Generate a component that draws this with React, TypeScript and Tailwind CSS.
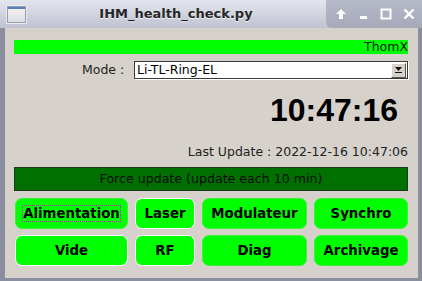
const dejavu = { fontFamily: '"DejaVu Sans", "Liberation Sans", sans-serif' };

function TitleBar() {
  return (
    <div className="relative flex h-[28px] items-center bg-gradient-to-b from-[#e4e6ee] to-[#bfc2d0]">
      <div className="ml-[7px] flex h-[17px] w-[19px] flex-col border border-[#9a9cae] bg-gradient-to-b from-[#f4f4f6] to-[#dcdde3] shadow-[0_0_0_1px_#e9eaf0]">
        <div className="h-[2px] bg-[#5b7fc4]" />
      </div>
      <div className="flex-1 text-center text-[13px] font-bold text-[#262626] [text-shadow:0_1px_0_#f4f4f8]" style={dejavu}>
        IHM_health_check.py
      </div>
      <div className="flex h-full w-[96px] items-center justify-around rounded-bl-[6px] bg-gradient-to-b from-[#b6b9c8] to-[#a6a9ba] pl-[4px] pr-[2px] text-white">
        <svg width="12" height="12" viewBox="0 0 12 12">
          <path d="M6 1 L11 6 H8 V11 H4 V6 H1 Z" fill="#fff" />
        </svg>
        <svg width="12" height="12" viewBox="0 0 12 12">
          <rect x="2" y="8" width="7" height="3" fill="#fff" />
        </svg>
        <svg width="12" height="12" viewBox="0 0 12 12">
          <rect x="1.5" y="1.5" width="9" height="9" fill="none" stroke="#fff" strokeWidth="2" />
        </svg>
        <svg width="12" height="12" viewBox="0 0 12 12">
          <path d="M1.5 1.5 L10.5 10.5 M10.5 1.5 L1.5 10.5" stroke="#fff" strokeWidth="2.4" />
        </svg>
      </div>
    </div>
  );
}

function GreenButton({ label, white, focus }: { label: string; white?: boolean; focus?: boolean }) {
  return (
    <button
      className={
        "flex h-[31px] items-center justify-center rounded-[7px] bg-[#00ff00] text-[13.3px] font-bold text-black " +
        (white ? "border-[1.5px] border-white" : "border border-[#3cf03c]")
      }
      style={dejavu}
    >
      <span className={focus ? "border border-dotted border-[#e000e0] leading-[15px]" : ""}>{label}</span>
    </button>
  );
}

export default function App() {
  return (
    <div className="flex h-[281px] w-[422px] flex-col overflow-hidden bg-[#7d8292]" style={dejavu}>
      <TitleBar />
      <div className="flex flex-1 border-l-[5px] border-r-[4px] border-b-[3px] border-[#8a8e9e]">
        <div className="flex flex-1 flex-col bg-[#d6d2cb] pl-[9px] pr-[10px] pt-[12px]">
          <div className="flex h-[14px] items-center justify-end bg-[#00ff00] text-[12.5px] leading-none text-[#111]">
            ThomX
          </div>
          <div className="mt-[7px] flex h-[18px] items-center">
            <span className="ml-[68px] w-[52px] text-[12.5px] text-[#222]">Mode :</span>
            <div className="flex h-[18px] flex-1 items-center border border-[#3a3a3a] bg-white shadow-[1px_1px_0_#fff]">
              <span className="ml-[2px] flex-1 text-[12.5px] leading-none text-black">Li-TL-Ring-EL</span>
              <div className="mr-[1px] flex h-[15px] w-[15px] flex-col items-center justify-center border border-t-white border-l-white border-r-[#555] border-b-[#555] bg-[#d6d2cb]">
                <svg width="7" height="6" viewBox="0 0 7 6">
                  <path d="M0 0 H7 L3.5 4 Z" fill="#111" />
                  <rect x="0" y="5" width="7" height="1" fill="#111" />
                </svg>
              </div>
            </div>
          </div>
          <div className="mt-[13px] flex h-[36px] items-center justify-end pr-[10px]">
            <span
              className="text-[32px] font-bold leading-none text-black"
              style={{ fontFamily: '"Liberation Sans", Arial, sans-serif' }}
            >
              10:47:16
            </span>
          </div>
          <div className="mt-[17px] flex h-[15px] items-center justify-end text-[12.5px] text-[#222]">
            Last Update : 2022-12-16 10:47:06
          </div>
          <div className="mt-[7px] flex h-[24px] items-center justify-center border border-[#1a3a1a] bg-[#007000] text-[12.6px] text-[#0a0a0a]">
            Force update (update each 10 min)
          </div>
          <div className="mt-[7px] grid grid-cols-[113px_60px_105px_94px] gap-x-[7px] gap-y-[6px] pl-[1px]">
            <GreenButton label="Alimentation" focus />
            <GreenButton label="Laser" white />
            <GreenButton label="Modulateur" />
            <GreenButton label="Synchro" />
            <GreenButton label="Vide" white />
            <GreenButton label="RF" white />
            <GreenButton label="Diag" />
            <GreenButton label="Archivage" />
          </div>
        </div>
      </div>
    </div>
  );
}
